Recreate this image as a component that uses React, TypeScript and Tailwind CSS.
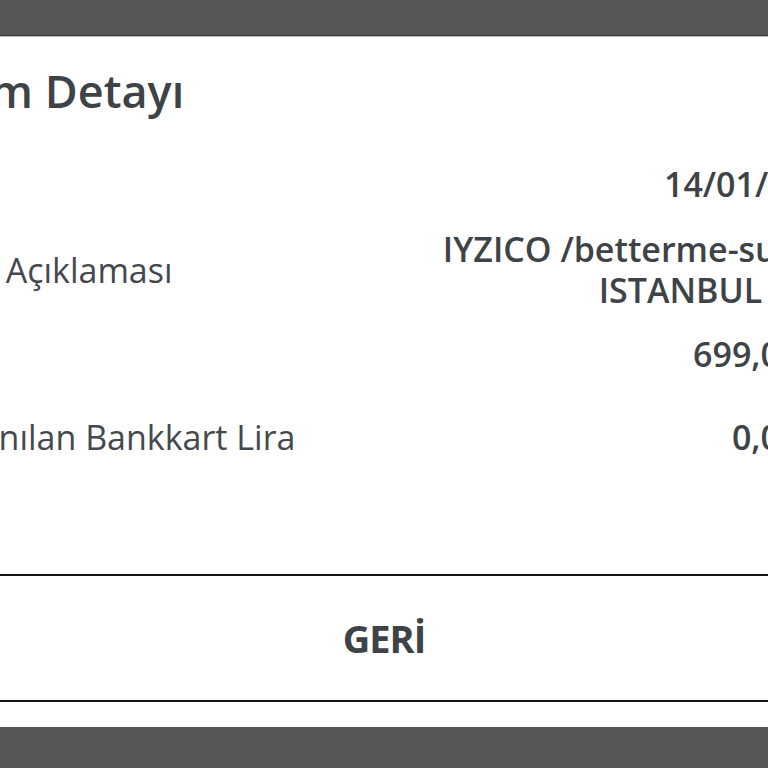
const rows = [
  { label: '', value: ['14/01/2025'], h: 'h-[78px]' },
  { label: 'İşlem Açıklaması', value: ['IYZICO /betterme-subscr', 'ISTANBUL\u00a0\u00a0TUR'], h: 'h-[94px]', lm: 'ml-[-88px]' },
  { label: '', value: ['699,00 TL'], h: 'h-[74px]' },
  { label: 'Kazanılan Bankkart Lira', value: ['0,00 TL'], h: 'h-[92px]', lm: 'ml-[-76px]' },
];

export default function App() {
  return (
    <div className="w-[768px] h-[768px] overflow-hidden bg-[#565656] flex flex-col font-['Open_Sans',sans-serif] text-[#3e4347]">
      <div className="h-[36px] shrink-0 border-b border-[#3c3c3c]" />
      <div className="h-[1px] shrink-0 bg-[#b8b8b8]" />
      <div className="w-[846px] shrink-0 bg-white flex flex-col">
        <div className="h-[108px] flex items-center">
          <h1 className="ml-[-84px] text-[45px] font-semibold whitespace-nowrap">İşlem Detayı</h1>
        </div>
        {rows.map((r, i) => (
          <div key={i} className={`${r.h} flex items-center justify-between`}>
            <span className={`${r.lm ?? ''} text-[34px] text-[#45494d] whitespace-nowrap`}>{r.label}</span>
            <div className="text-right text-[34px] font-semibold leading-[41px] whitespace-nowrap">
              {r.value.map(v => (
                <div key={v}>{v}</div>
              ))}
            </div>
          </div>
        ))}
        <div className="h-[91px]" />
        <div className="w-[768px] border-y-2 border-[#141414] h-[128px] flex items-center justify-center">
          <span className="text-[38px] font-bold tracking-tight">GERİ</span>
        </div>
        <div className="h-[25px]" />
      </div>
    </div>
  );
}
